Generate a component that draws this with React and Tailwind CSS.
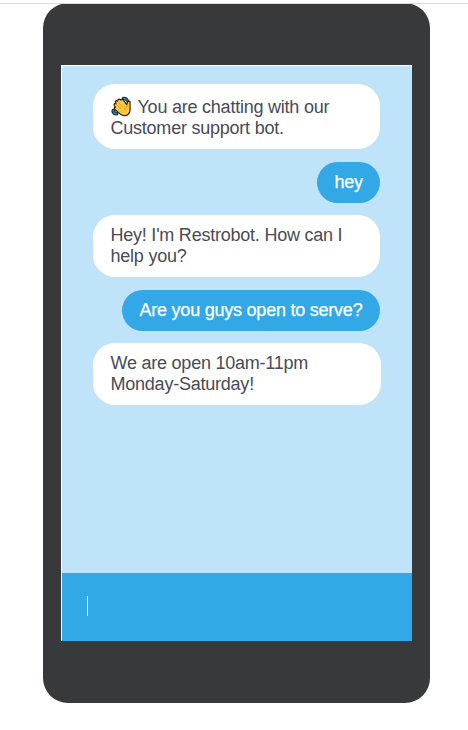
function WavingHand() {
  return (
    <svg viewBox="0 0 22 22" className="mr-[5px] inline-block h-[22px] w-[22px] align-[-5px]" aria-label="Waving hand">
      <path
        d="M3.2 9.2C2.6 8 4 6.9 5 7.8L4.4 6.3C4 5 5.5 4.2 6.4 5.2L7 4.2C7.2 3 8.6 2.8 9.3 3.7L9.8 4.1C10.2 2.9 11.4 2.9 12.1 3.8L15.7 8.6C16.2 7.1 16.3 5.5 17.6 5.2C19 5 19.4 6.3 19 7.6L19.1 14C19 18.4 15.8 20 12.9 19.6C10.6 19.5 8.8 18 7.5 16.6L3.8 13.2C2.7 12 3.4 11.1 4.4 11.4Z"
        fill="#ffc83d"
        stroke="#2b2112"
        strokeWidth="1.2"
        strokeLinejoin="round"
      />
      <path d="M5.3 8.2L9.3 12.4M7.3 6.2L11.2 10.6M15.8 8.8L16 11C14.4 11.3 13.4 12.8 14 14.5" fill="none" stroke="#c98a20" strokeWidth=".7" strokeLinecap="round" />
      <path d="M12 1.4C14 .8 16.5 2.1 17.4 4.4C17.9 5.8 16.5 6.5 15.8 5.4C15.2 4.2 14 3.6 12.7 3.7C11.4 3.6 11 1.9 12 1.4ZM1.5 13.6C2.4 12.8 3.6 13.5 3.5 14.7C3.7 15.7 4.6 16.5 5.8 16.5C7.2 16.7 7.3 18.4 6 18.9C3.5 19.5.8 17.4.9 14.8Z" fill="#23899b" stroke="#102e38" strokeWidth="1.1" />
    </svg>
  );
}

function Bubble({ mine, className, children }) {
  return (
    <div
      className={`rounded-[22px] px-[17.5px] text-[18px] leading-[21px] tracking-[-0.23px] whitespace-nowrap ${
        mine ? "h-[41px] self-end bg-[#33a8e7] pt-[10px] text-white [-webkit-text-stroke:0.25px_white]" : "bg-white text-[#484c55]"
      } ${className}`}
    >
      {children}
    </div>
  );
}

export default function App() {
  return (
    <div className="h-[730px] w-[468px] overflow-hidden bg-white pt-[3px] font-['Liberation_Sans',Arial,sans-serif]">
      <div className="relative">
        <div className="absolute inset-x-0 top-0 h-px bg-[#dadada]" />
        <div className="ml-[43px] h-[700px] w-[387px] rounded-[25px] bg-[#38393a] pt-[62px] pl-[18px]">
          <div className="h-[576px] w-[351px] border-t border-l border-white bg-white">
            <div className="flex h-[507px] flex-col rounded-t-[3px] bg-[#bfe4f9] pt-[18px] pr-[32px] pl-[31px]">
              <Bubble className="h-[65px] w-[287px] pt-[12px]">
                <WavingHand />You are chatting with our
                <br />
                Customer support bot.
              </Bubble>
              <Bubble mine className="mt-[13px] w-[63px]">hey</Bubble>
              <Bubble className="mt-[12px] h-[62px] w-[287px] pt-[10px]">
                Hey! I'm Restrobot. How can I<br />help you?
              </Bubble>
              <Bubble mine className="mt-[13px] w-[258px]">Are you guys open to serve?</Bubble>
              <Bubble className="mt-[12px] h-[62px] w-[288px] pt-[10px]">
                We are open 10am-11pm<br />Monday-Saturday!
              </Bubble>
            </div>
            <div className="flex h-[68px] bg-[#33a8e7] pt-[23px] pl-[25px]">
              <div className="h-[20px] w-px bg-white" />
            </div>
          </div>
        </div>
      </div>
    </div>
  );
}
